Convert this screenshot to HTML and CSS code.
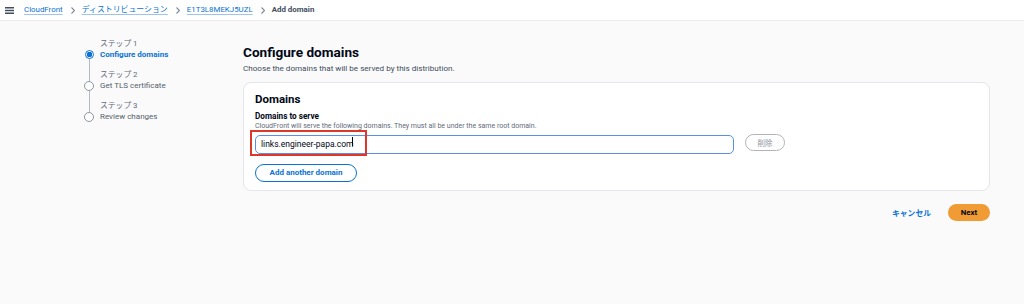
FILE: index.html
```html
<!DOCTYPE html>
<html lang="ja">
<head>
  <meta charset="UTF-8" />
  <meta name="viewport" content="width=device-width, initial-scale=1" />
  <title>Add domain | CloudFront</title>
  <link rel="stylesheet" href="styles.css">
</head>
<body>
  <header class="topbar">
    <button class="menu-toggle" aria-label="Open navigation">
      <svg width="9" height="7" viewBox="0 0 9 7" aria-hidden="true">
        <path d="M0 0.75h9M0 3.5h9M0 6.25h9" stroke="#414d5c" stroke-width="1.3" />
      </svg>
    </button>
    <nav class="breadcrumbs">
      <a href="#">CloudFront</a>
      <svg class="crumb-sep" width="4" height="7" viewBox="0 0 4 7" aria-hidden="true"><path d="M0.5 0.5L3.5 3.5L0.5 6.5" fill="none" stroke="#7d8998" stroke-width="1.1" /></svg>
      <a href="#">ディストリビューション</a>
      <svg class="crumb-sep" width="4" height="7" viewBox="0 0 4 7" aria-hidden="true"><path d="M0.5 0.5L3.5 3.5L0.5 6.5" fill="none" stroke="#7d8998" stroke-width="1.1" /></svg>
      <a href="#">E1T3L8MEKJ5UZL</a>
      <svg class="crumb-sep" width="4" height="7" viewBox="0 0 4 7" aria-hidden="true"><path d="M0.5 0.5L3.5 3.5L0.5 6.5" fill="none" stroke="#7d8998" stroke-width="1.1" /></svg>
      <span class="crumb-current">Add domain</span>
    </nav>
  </header>

  <main class="wizard">
    <ol class="steps">
      <li class="step active">
        <div class="rail"><span class="line line-top"></span><span class="dot"></span><span class="line line-bottom"></span></div>
        <div class="step-text">
          <div class="step-label">ステップ 1</div>
          <div class="step-title">Configure domains</div>
        </div>
      </li>
      <li class="step">
        <div class="rail"><span class="line line-top"></span><span class="dot"></span><span class="line line-bottom"></span></div>
        <div class="step-text">
          <div class="step-label">ステップ 2</div>
          <div class="step-title">Get TLS certificate</div>
        </div>
      </li>
      <li class="step">
        <div class="rail"><span class="line line-top"></span><span class="dot"></span><span class="line line-bottom"></span></div>
        <div class="step-text">
          <div class="step-label">ステップ 3</div>
          <div class="step-title">Review changes</div>
        </div>
      </li>
    </ol>

    <section class="content">
      <h1>Configure domains</h1>
      <p class="page-desc">Choose the domains that will be served by this distribution.</p>

      <div class="card">
        <h2>Domains</h2>
        <div class="field">
          <label for="domain-0">Domains to serve</label>
          <div class="field-hint">CloudFront will serve the following domains. They must all be under the same root domain.</div>
          <div class="domain-row">
            <div class="input-wrap">
              <input type="text" id="domain-0" value="links.engineer-papa.com">
              <span class="caret"></span>
              <span class="highlight-box"></span>
            </div>
            <button class="btn-remove" disabled>削除</button>
          </div>
          <button class="btn-outline">Add another domain</button>
        </div>
      </div>

      <div class="actions">
        <a href="#" class="btn-link">キャンセル</a>
        <button class="btn-primary">Next</button>
      </div>
    </section>
  </main>
</body>
</html>
```

FILE: styles.css
```css
:root {
  --blue: #0972d3;
  --text: #000716;
  --muted: #5f6b7a;
  --border: #e3e6ea;
  --page-bg: #fafafa;
  --orange: #f09b34;
}

body {
  margin: 0;
  font-family: Roboto, 'Noto Sans CJK JP', sans-serif;
  background: var(--page-bg);
  color: var(--text);
}

/* Top bar */
.topbar {
  height: 20px;
  background: #fff;
  border-bottom: 1px solid #e9ebed;
  display: flex;
  align-items: center;
  padding-left: 5px;
}

.menu-toggle {
  border: none;
  background: none;
  padding: 0;
  width: 9px;
  height: 7px;
  display: flex;
  margin-right: 10px;
}

.breadcrumbs {
  display: flex;
  align-items: center;
  font-size: 7.9px;
  line-height: 12px;
}

.breadcrumbs a {
  color: var(--blue);
  text-decoration: underline;
  text-decoration-color: #9cc4ec;
  text-underline-offset: 1.5px;
}

.crumb-sep {
  margin: 0 7px 0 8px;
}

.crumb-current {
  color: #414d5c;
  font-weight: 700;
}

/* Wizard layout */
.wizard {
  display: flex;
  padding: 17px 34px 0 84px;
}

.steps {
  list-style: none;
  margin: 0;
  padding: 0;
  width: 159px;
  flex-shrink: 0;
}

.step {
  display: flex;
  gap: 6px;
}

.rail {
  width: 10px;
  display: flex;
  flex-direction: column;
  align-items: center;
}

.line {
  width: 1px;
  background: #b4bbc4;
}

.line-top {
  height: 12px;
}

.line-bottom {
  flex: 1;
}

.step:first-child .line-top,
.step:last-child .line-bottom {
  visibility: hidden;
}

.dot {
  width: 8px;
  height: 8px;
  border: 1px solid #8c96a3;
  border-radius: 50%;
  background: #fff;
  flex-shrink: 0;
}

.step.active .dot {
  width: 7px;
  height: 7px;
  border: 1.5px solid var(--blue);
  background: radial-gradient(circle, var(--blue) 0 2.6px, #fff 3px);
}

.step-text {
  padding-bottom: 8px;
}

.step:last-child .step-text {
  padding-bottom: 0;
}

.step-label {
  font-size: 7.8px;
  line-height: 11px;
  color: var(--muted);
}

.step-title {
  font-size: 8px;
  line-height: 12px;
  color: #545f6c;
}

.step.active .step-title {
  color: var(--blue);
  font-weight: 700;
}

/* Main content */
.content {
  flex: 1;
  padding-top: 5px;
}

h1 {
  margin: 0;
  font-size: 13.6px;
  line-height: 18px;
  font-weight: 700;
}

.page-desc {
  margin: 2px 0 9px;
  font-size: 8.1px;
  line-height: 10px;
  color: #414d5c;
}

.card {
  box-sizing: border-box;
  background: #fff;
  border: 1px solid var(--border);
  border-radius: 8px;
  padding: 9px 12px 0 11px;
  height: 109px;
}

h2 {
  margin: 0 0 6px;
  font-size: 11.5px;
  line-height: 14px;
  font-weight: 700;
}

.field label {
  display: block;
  font-size: 8.2px;
  line-height: 9px;
  font-weight: 700;
}

.field-hint {
  font-size: 7px;
  line-height: 10px;
  color: var(--muted);
  margin-bottom: 1px;
}

.domain-row {
  display: flex;
  align-items: center;
  gap: 11px;
}

.input-wrap {
  position: relative;
  width: 479px;
}

.input-wrap input {
  width: 100%;
  box-sizing: border-box;
  height: 19px;
  border: 1.5px solid #5b8ee6;
  border-radius: 5px;
  padding: 0 5px;
  font-family: inherit;
  font-size: 8.5px;
  color: var(--text);
  outline: none;
}

.caret {
  position: absolute;
  left: 97px;
  top: 5px;
  width: 1px;
  height: 9px;
  background: var(--text);
}

/* annotation drawn over the screenshot */
.highlight-box {
  position: absolute;
  left: -5px;
  top: -2px;
  width: 113px;
  height: 22px;
  border: 2px solid #e0372b;
}

.btn-remove {
  width: 40px;
  height: 17px;
  border: 1.2px solid #b0b5bb;
  border-radius: 9px;
  background: #fff;
  color: #8d949c;
  font-family: inherit;
  font-size: 7.5px;
  padding: 0;
}

.btn-outline {
  margin-top: 10px;
  height: 18px;
  width: 102px;
  border: 1.5px solid var(--blue);
  border-radius: 10px;
  background: #fff;
  color: var(--blue);
  font-family: inherit;
  font-size: 8px;
  font-weight: 700;
  padding: 0;
}

.actions {
  display: flex;
  justify-content: flex-end;
  align-items: center;
  gap: 17px;
  margin-top: 13px;
}

.btn-link {
  color: var(--blue);
  font-size: 7.8px;
  font-weight: 700;
  text-decoration: none;
}

.btn-primary {
  width: 42px;
  height: 17px;
  border: none;
  border-radius: 9px;
  background: var(--orange);
  color: var(--text);
  font-family: inherit;
  font-size: 7.8px;
  font-weight: 700;
  padding: 0;
}
```
